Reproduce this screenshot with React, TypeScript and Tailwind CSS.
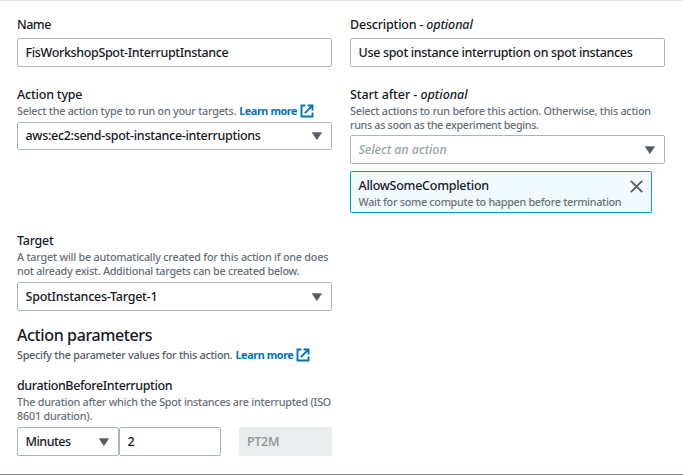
const box = 'flex items-center rounded-[2px] border border-[#aab7b8] bg-white pl-[7.5px] pr-[7px] text-[12.5px] leading-[18px] whitespace-nowrap';
const label = 'h-[18px] whitespace-nowrap text-[12.5px] leading-[18px]';
const hint = 'whitespace-nowrap text-[10.8px] leading-[14px] text-[#687078]';

function Caret() {
  return (
    <svg className="ml-auto mr-[2px] shrink-0" width="10" height="8" viewBox="0 0 10 8">
      <path d="M0 0.5H9.8L4.9 7.8Z" fill="#545b64" stroke="#545b64" strokeWidth=".4" />
    </svg>
  );
}

function LearnMore() {
  return (
    <a className="ml-[3px] flex items-center font-bold text-[#0073bb]">
      <span className="w-[58px] tracking-[-0.4px]">Learn more</span>
      <svg className="ml-[3px]" width="14" height="14" viewBox="0 0 14 14" fill="none" stroke="#0073bb" strokeWidth="1.9">
        <path d="M5.5 1.5H1.5V12.5H12.5V8.5" />
        <path d="M7.5 1.5H12.5V6.5M12.2 1.8L4.8 9.2" />
      </svg>
    </a>
  );
}

export default function App() {
  return (
    <main className="h-[475px] w-[683px] overflow-hidden border-t border-b border-t-[#dfe5e5] border-b-[#879596] bg-white pl-[17px] pt-[15px] font-['Noto_Sans',sans-serif] font-medium text-[#16191f]">
      <div className="flex gap-[18px]">
        <section className="w-[315px]">
          <div className={`${label} tracking-[-0.5px]`}>Name</div>
          <div className={`${box} mt-[4px] h-[29px] pt-px`}><span className="tracking-[-0.35px]">FisWorkshopSpot-InterruptInstance</span></div>
        </section>
        <section className="w-[315px]">
          <div className={label}><span className="tracking-[-0.2px]">Description - </span><em className="tracking-[-0.1px]">optional</em></div>
          <div className={`${box} mt-[4px] h-[29px] pt-px`}><span className="tracking-[-0.33px]">Use spot instance interruption on spot instances</span></div>
        </section>
      </div>

      <div className="mt-[19px] flex h-[146px] gap-[18px]">
        <section className="w-[315px]">
          <div className={`${label} tracking-[-0.2px]`}>Action type</div>
          <div className={`${hint} flex h-[14px] items-center`}><span className="tracking-[-0.25px]">Select the action type to run on your targets.</span><LearnMore /></div>
          <div className={`${box} mt-[4px] h-[28px]`}><span className="tracking-[-0.3px]">aws:ec2:send-spot-instance-interruptions</span><Caret /></div>
        </section>
        <section className="w-[315px]">
          <div className={label}><span className="tracking-[-0.08px]">Start after - </span><em>optional</em></div>
          <div className={hint}>
            <div className="tracking-[-0.25px]">Select actions to run before this action. Otherwise, this action</div>
            <div className="tracking-[-0.36px]">runs as soon as the experiment begins.</div>
          </div>
          <div className={`${box} mt-[3px] h-[29px] pt-px`}><em className="tracking-[-0.06px] text-[#95a5a6]">Select an action</em><Caret /></div>
          <div className="mt-[7px] flex h-[42px] w-[302px] justify-between rounded-[2px] border border-[#00a1c9] bg-[#f1faff] pl-[7.5px] pr-[8px]">
            <div className="pt-[5px]">
              <div className={`${label} tracking-[-0.26px]`}>AllowSomeCompletion</div>
              <div className={`${hint} tracking-[-0.29px]`}>Wait for some compute to happen before termination</div>
            </div>
            <svg className="mt-[8px] shrink-0" width="13" height="13" viewBox="0 0 13 13" fill="none" stroke="#545b64" strokeWidth="1.8">
              <path d="M.8 .8L12.2 12.2M12.2 .8L.8 12.2" />
            </svg>
          </div>
        </section>
      </div>

      <section className="w-[315px]">
        <div className={`${label} tracking-[-0.25px]`}>Target</div>
        <div className={hint}>
          <div className="tracking-[-0.23px]">A target will be automatically created for this action if one does</div>
          <div className="tracking-[-0.28px]">not already exist. Additional targets can be created below.</div>
        </div>
        <div className={`${box} mt-[4px] h-[29px] pt-px`}><span className="tracking-[-0.25px]">SpotInstances-Target-1</span><Caret /></div>
        <h2 className="mt-[12px] h-[25px] whitespace-nowrap text-[16px] leading-[24px] tracking-[-0.38px]">Action parameters</h2>
        <div className="flex h-[14px] items-center whitespace-nowrap text-[10.8px] leading-[14px] text-[#545b64]"><span className="tracking-[-0.26px]">Specify the parameter values for this action.</span><LearnMore /></div>
        <div className={`${label} mt-[15px] tracking-[-0.38px]`}>durationBeforeInterruption</div>
        <div className={hint}>
          <div className="tracking-[-0.27px]">The duration after which the Spot instances are interrupted (ISO</div>
          <div className="tracking-[-0.2px]">8601 duration).</div>
        </div>
        <div className="mt-[4px] flex">
          <div className={`${box} h-[29px] w-[102px] pt-px`}><span className="tracking-[-0.5px]">Minutes</span><Caret /></div>
          <div className={`${box} h-[29px] w-[102px] pt-px`}>2</div>
          <div className="ml-[18px] flex h-[29px] w-[93px] items-center rounded-[2px] bg-[#eaeded] pl-[8px] pt-px text-[12.5px] tracking-[-0.3px] text-[#879596]">PT2M</div>
        </div>
      </section>
    </main>
  );
}
